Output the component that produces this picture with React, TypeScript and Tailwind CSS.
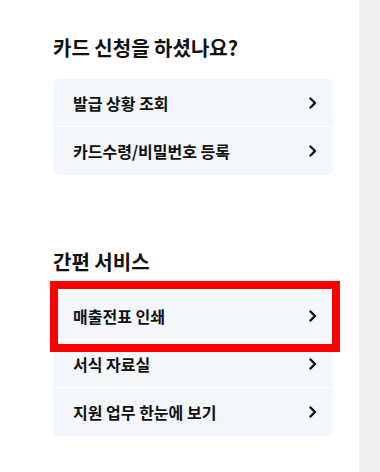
import React from "react";

const Chevron = () => (
  <svg width="8" height="12" viewBox="0 0 8 12" fill="none">
    <path d="M1.5 1.5L6 6L1.5 10.5" stroke="#111" strokeWidth="2.4" strokeLinecap="round" strokeLinejoin="round" />
  </svg>
);

const Row = ({ label, last }: { label: string; last?: boolean }) => (
  <div className={`flex items-center justify-between h-[48px] pl-[20px] pr-[16px] ${last ? "" : "border-b border-white"}`}>
    <span className="text-[16px] font-semibold text-[#111]">{label}</span>
    <Chevron />
  </div>
);

export default function App() {
  return (
    <div
      className="flex w-[380px] h-[472px] overflow-hidden bg-white"
      style={{ fontFamily: '"Noto Sans CJK KR", "Noto Sans", sans-serif' }}
    >
      <div className="w-[359px] shrink-0 pl-[53px] pr-[26px] pt-[36px]">
        <h2 className="text-[20px] font-bold text-[#111] leading-[24px]">카드 신청을 하셨나요?</h2>
        <div className="mt-[19px] rounded-[6px] bg-[#f3f6fa] overflow-hidden">
          <Row label="발급 상황 조회" />
          <Row label="카드수령/비밀번호 등록" last />
        </div>
        <h2 className="mt-[75px] text-[20px] font-bold text-[#111] leading-[24px]">간편 서비스</h2>
        <div className="relative mt-[18px] rounded-[6px] bg-[#f3f6fa]">
          <Row label="매출전표 인쇄" />
          <Row label="서식 자료실" />
          <Row label="지원 업무 한눈에 보기" last />
          <div className="absolute left-[-3px] top-[-11px] w-[290px] h-[71px] border-[8px] border-[#ff0000]" />
        </div>
      </div>
      <div className="flex-1 bg-[#f0f0f0]" />
    </div>
  );
}
